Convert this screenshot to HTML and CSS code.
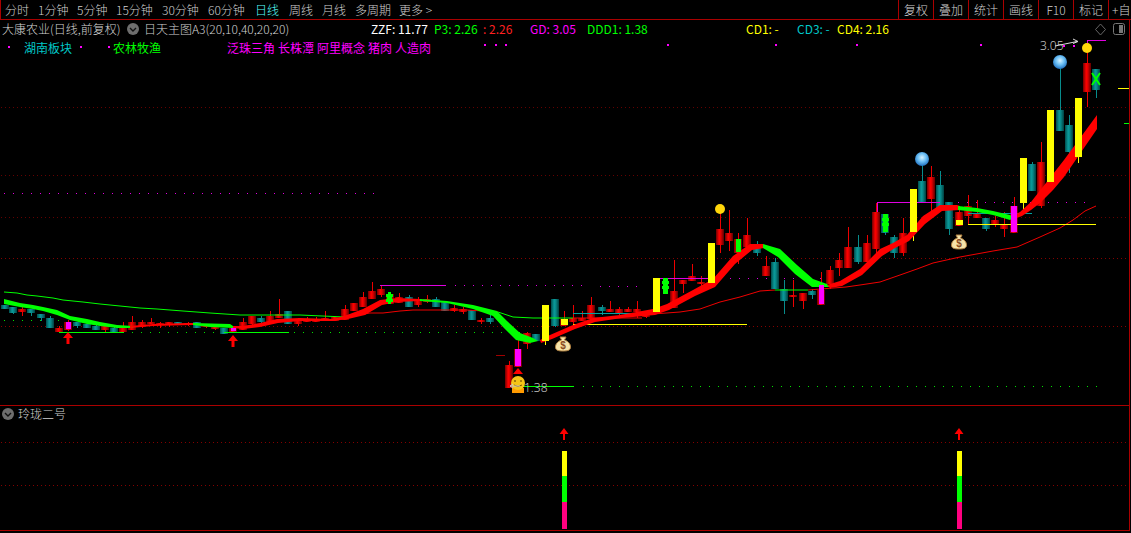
FILE: index.html
```html
<!DOCTYPE html>
<html lang="zh-CN">
<head>
<meta charset="utf-8">
<title>大康农业 日线</title>
<link rel="stylesheet" href="styles.css">
</head>
<body>
<div class="app">
  <header class="toolbar">
    <nav class="periods">
      <span class="t33">分时</span><span class="t39">1分钟</span><span class="t39">5分钟</span><span class="t46">15分钟</span><span class="t46">30分钟</span><span class="t47">60分钟</span><span class="t34 active">日线</span><span class="t33">周线</span><span class="t33">月线</span><span class="t44">多周期</span><span>更多 <i class="chev">&gt;</i></span>
    </nav>
    <nav class="tools">
      <span>复权</span><span>叠加</span><span>统计</span><span>画线</span><span>F10</span><span>标记</span><span class="clip">+自</span>
    </nav>
  </header>

  <section class="main">
    <div class="overlay">
      <div class="info">
        <span class="c-name w-name">大康农业(日线,前复权)</span>
        <svg class="toggle" width="12" height="12" viewBox="0 0 12 12"><circle cx="6" cy="6" r="6" fill="#6e6e6e"/><path d="M3 5l3 3 3-3" fill="none" stroke="#111" stroke-width="1.4"/></svg>
        <span class="c-name w-title">日天主图A3(20,10,40,20,20)</span>
        <span class="c-white w-zzf">ZZF: 11.77</span>
        <span class="c-green w-p3">P3: 2.26</span>
        <span class="c-red w-r">: 2.26</span>
        <span class="c-mag w-gd">GD: 3.05</span>
        <span class="c-green w-ddd">DDD1: 1.38</span>
        <span class="c-yellow w-cd1">CD1: -</span>
        <span class="c-teal w-cd3">CD3: -</span>
        <span class="c-yellow w-cd4">CD4: 2.16</span>
        <svg class="winicons" width="32" height="13" viewBox="0 0 32 13"><path d="M6.500 1l5 5.500-5 5.500-5-5.500z" fill="none" stroke="#666"/><rect x="19.500" y="0.500" width="11" height="11" rx="2" fill="none" stroke="#777"/><rect x="25" y="2" width="4" height="8" fill="#777"/></svg>
      </div>
      <div class="legend">
        <span class="c-teal w-a">湖南板块</span>
        <span class="c-green w-b">农林牧渔</span>
        <span class="c-mag w-c">泛珠三角</span>
        <span class="c-mag w-d">长株潭</span>
        <span class="c-mag w-e">阿里概念</span>
        <span class="c-mag w-f">猪肉</span>
        <span class="c-mag">人造肉</span>
      </div>
    </div>

    <svg class="chart" width="1129" height="385" viewBox="0 20 1129 385">
      <defs>
        <linearGradient id="ru"><stop offset="0" stop-color="#6e0000"/><stop offset=".4" stop-color="#f00"/><stop offset=".6" stop-color="#e00000"/><stop offset="1" stop-color="#5e0000"/></linearGradient>
        <linearGradient id="td"><stop offset="0" stop-color="#004c4c"/><stop offset=".4" stop-color="#0a9a9a"/><stop offset=".6" stop-color="#088888"/><stop offset="1" stop-color="#003f3f"/></linearGradient>
        <radialGradient id="ball" cx=".5" cy=".4" r=".6"><stop offset="0" stop-color="#d8f2ff"/><stop offset=".5" stop-color="#6cc0f5"/><stop offset="1" stop-color="#2070c0"/></radialGradient>
        <g id="bag">
          <path d="M-3-7h6l-1.500 3c4 1.500 6 4 6 7 0 3-2 4-7.500 4s-7.500-1-7.500-4c0-3 2-5.500 6-7z" fill="#f6e3a8" stroke="#b08040"/>
          <text class="dollar" x="0" y="5" text-anchor="middle">$</text>
        </g>
      </defs>

      <g class="grid">
        <path d="M1 107H1129M1 175H1129M1 217H1129"/>
        <path class="grid-b" d="M1 258H1129M1 326H1129"/>
      </g>

      <g class="dots-mag">
        <path d="M4 193H380"/>
        <path d="M455 285H590M600 286H640M730 278H830M958 202H1090"/>
      </g>
      <path class="dots-green" d="M4 320H62M132 332H520"/>
      <path class="dots-green" d="M583 386H1100"/>
      <path class="dots-mag2" d="M8 47h2M80 47h2M108 47h2M484 45h2M495 45h2M505 45h2M667 45h2M775 45h2M856 45h2M980 45h2M1063 46h2M1073 46h2"/>

      <g class="wick wr">
        <path d="M22 307V316M59 326V332M68 320V331M105 326V333M123 322V331M132 316V330M142 320V328M151 318V324M160 322V328M169 322V327M188 322V326M206 325V328M215 325V330M233 328V332M243 318V330M252 316V325M270 311V323M279 299V317M298 318V326M307 317V322M316 317V322M325 311V321M335 317V321M345 305V320M354 303V311M363 292V307M372 282V298M381 285V297M399 293V303M418 297V307M427 295V303M454 305V312M463 307V314M481 318V324M509 361V388M518 340V367M527 332V349M564 311V326M573 305V327M582 311V321M591 297V320M610 301V312M619 307V315M628 307V312M637 301V318M646 312V318M674 260V308M683 280V293M692 264V281M701 276V292M720 213V253M729 210V251M738 233V264M747 218V247M766 256V276M793 280V307M803 293V309M821 272V305M830 266V289M839 253V276M848 227V268M867 235V261M876 203V253M903 218V256M931 166V214M959 208V225M968 195V225M977 200V217M995 216V227M1004 212V237M1014 197V232M1041 142V208M1087 48V107"/>
      </g>
      <g class="wick wt">
        <path d="M13 307V314M31 309V316M41 314V321M50 316V328M77 322V328M87 324V328M96 323V329M114 327V331M224 328V333M261 316V323M409 295V306M436 297V306M490 315V324M555 299V327M602 305V315M757 241V256M775 258V288M784 280V314M812 289V299M858 235V264M885 214V235M894 235V258M922 159V201M940 171V207M949 202V235M986 218V231M1032 162V190M1060 62V131M1069 115V173M1096 69V98"/>
      </g>
      <g class="wick wy">
        <path d="M545 341V345M656 312V314M711 283V287M913 232V241M1023 203V212M1050 182V185M1078 157V163"/>
      </g>

      <g class="bodies" fill="url(#ru)">
        <rect x="18" y="309" height="3"/><rect x="55" y="328" height="4"/><rect x="64" y="322" height="8"/><rect x="101" y="326" height="4"/><rect x="119" y="328" height="4"/><rect x="128" y="322" height="8"/><rect x="138" y="322" height="5"/><rect x="147" y="322" height="2"/><rect x="156" y="323" height="2"/><rect x="165" y="322" height="3"/><rect x="184" y="323" height="2"/><rect x="202" y="325" height="2"/><rect x="211" y="327" height="2"/><rect x="229" y="328" height="4"/><rect x="239" y="322" height="8"/><rect x="248" y="316" height="8"/><rect x="266" y="316" height="6"/><rect x="275" y="314" height="4"/><rect x="294" y="320" height="4"/><rect x="303" y="319" height="3"/><rect x="312" y="319" height="3"/><rect x="321" y="318" height="3"/><rect x="331" y="317" height="4"/><rect x="341" y="309" height="11"/><rect x="350" y="303" height="8"/><rect x="359" y="297" height="10"/><rect x="368" y="291" height="8"/><rect x="377" y="289" height="6"/><rect x="386" y="294" height="10"/><rect x="395" y="297" height="6"/><rect x="414" y="299" height="6"/><rect x="423" y="299" height="3"/><rect x="450" y="308" height="3"/><rect x="459" y="309" height="3"/><rect x="477" y="320" height="2"/><rect x="505" y="365" height="23"/><rect x="514" y="349" height="18"/><rect x="523" y="333" height="11"/><rect x="560" y="319" height="7"/><rect x="569" y="318" height="4"/><rect x="578" y="318" height="3"/><rect x="587" y="305" height="14"/><rect x="606" y="309" height="3"/><rect x="615" y="309" height="5"/><rect x="624" y="309" height="3"/><rect x="633" y="309" height="3"/><rect x="642" y="314" height="3"/><rect x="670" y="291" height="17"/><rect x="679" y="280" height="4"/><rect x="688" y="276" height="5"/><rect x="697" y="282" height="2"/><rect x="716" y="229" height="16"/><rect x="725" y="233" height="8"/><rect x="734" y="239" height="14"/><rect x="743" y="235" height="12"/><rect x="762" y="266" height="10"/><rect x="789" y="295" height="2"/><rect x="799" y="293" height="8"/><rect x="817" y="290" height="15"/><rect x="826" y="270" height="14"/><rect x="835" y="260" height="8"/><rect x="844" y="247" height="21"/><rect x="863" y="243" height="19"/><rect x="872" y="212" height="37"/><rect x="899" y="233" height="20"/><rect x="927" y="177" height="22"/><rect x="955" y="212" height="14"/><rect x="964" y="206" height="10"/><rect x="973" y="214" height="4"/><rect x="991" y="220" height="4"/><rect x="1000" y="225" height="4"/><rect x="1010" y="206" height="27"/><rect x="1037" y="162" height="44"/><rect x="1083" y="63" height="29"/>
      </g>
      <g class="bodies" fill="url(#td)">
        <rect x="1" y="305" height="4"/><rect x="9" y="307" height="6"/><rect x="27" y="309" height="4"/><rect x="37" y="314" height="4"/><rect x="46" y="318" height="10"/><rect x="73" y="322" height="4"/><rect x="83" y="324" height="4"/><rect x="92" y="326" height="4"/><rect x="110" y="328" height="4"/><rect x="174" y="322" height="3"/><rect x="193" y="322" height="6"/><rect x="220" y="328" height="6"/><rect x="257" y="318" height="4"/><rect x="284" y="311" height="13"/><rect x="405" y="297" height="10"/><rect x="432" y="299" height="8"/><rect x="441" y="302" height="9"/><rect x="468" y="310" height="10"/><rect x="486" y="318" height="4"/><rect x="532" y="334" height="7"/><rect x="551" y="299" height="27"/><rect x="598" y="307" height="4"/><rect x="753" y="245" height="8"/><rect x="771" y="262" height="27"/><rect x="780" y="289" height="12"/><rect x="808" y="291" height="4"/><rect x="854" y="247" height="15"/><rect x="881" y="214" height="19"/><rect x="890" y="237" height="16"/><rect x="918" y="181" height="21"/><rect x="936" y="185" height="23"/><rect x="945" y="202" height="27"/><rect x="982" y="218" height="11"/><rect x="1028" y="164" height="27"/><rect x="1056" y="110" height="21"/><rect x="1065" y="125" height="27"/><rect x="1092" y="69" height="21"/>
      </g>

      <g class="thin">
        <path class="t-green" d="M4 292L17 293 27 295 37 296 53 298 63 300 83 302 100 304 120 306 140 308 157 309 183 311 210 313 240 315 300 315 345 317"/>
        <path class="t-red" d="M345 317L370 313 383 313 400 311 413 310 467 310 498 312"/>
        <path class="t-green" d="M498 312L513 317 533 318 573 318"/>
        <path class="t-red" d="M642 315L653 314 680 312 700 309 720 302 740 297 760 291 775 290"/>
        <path class="t-green" d="M775 290H808"/>
        <path class="t-red" d="M808 290L846 287 860 285 880 282 900 275 917 269 933 263 960 257 993 251 1017 247 1040 237 1060 228 1073 220 1085 211 1096 206"/>
        <path class="t-red" d="M573 318H642"/>
        <path class="t-teal" d="M573 313H637M968 213H1032"/>
        <path class="t-yellow" d="M573 324H747M968 224H1096M1118 88H1129"/>
        <path class="t-lime" d="M59 332H124M224 332H289M518 386H574M1124 123H1129"/>
        <path class="t-mag" d="M380 285H446M660 278H720M877 212V202H940M1087 48V40H1106"/>
        <path class="t-dash" d="M496 355H505"/>
      </g>

      <polygon fill="#0f0" points="4,299 20,303 33,305 43,307 57,310 70,316 87,319 100,322 117,325 133,326 133,328 117,328 100,326 87,324 70,320 57,315 43,311 33,309 20,307 4,304"/>
      <polygon fill="#f00" points="130,326 153,324 187,323 193,323 193,325 153,326 130,328"/>
      <polygon fill="#0f0" points="193,323 230,324 233,326 233,328 210,327 193,325"/>
      <polygon fill="#f00" points="233,326 243,326 260,323 277,319 300,318 333,319 347,315 363,309 380,300 397,298 420,299 420,301 397,302 382,305 365,315 348,319 333,321 300,321 278,323 260,327 243,329 233,328"/>
      <polygon fill="#0f0" points="420,299 447,301 473,305 497,311 507,321 520,333 533,338 538,341 530,343 516,340 503,327 493,316 473,309 447,303 420,301"/>
      <polygon fill="#f00" points="540,340 550,335 573,325 593,318 620,315 653,309 667,304 693,290 713,279 733,256 750,244 763,244 764,248 752,250 735,264 715,287 695,296 669,310 655,315 622,318 595,322 575,329 552,339 541,343"/>
      <polygon fill="#0f0" points="763,244 780,249 797,265 813,279 827,284 830,287 812,287 795,274 778,257 763,248"/>
      <polygon fill="#f00" points="827,285 840,281 860,269 880,249 893,243 907,235 923,216 940,205 957,205 960,206 960,210 942,211 925,224 909,241 895,248 882,256 862,275 842,286 830,288"/>
      <polygon fill="#0f0" points="958,206 977,208 993,211 1010,215 1014,217 1010,220 993,215 977,212 958,210"/>
      <polygon fill="#f00" points="1012,216 1020,212 1031,202 1053,174 1064,160 1097,115 1097,129 1064,177 1053,190 1040,203 1031,210 1022,216 1014,219"/>

      <g class="marks">
        <rect class="m-mag" x="66" y="322" width="5" height="7"/>
        <rect class="m-mag" x="231" y="328" width="5" height="3"/>
        <rect class="m-mag" x="515" y="349" width="6" height="17"/>
        <rect class="m-mag" x="819" y="285" width="5" height="19"/>
        <rect class="m-mag" x="1011" y="206" width="6" height="26"/>
        <rect class="m-yel" x="542" y="305" width="7" height="36"/>
        <rect class="m-yel" x="653" y="278" width="7" height="34"/>
        <rect class="m-yel" x="708" y="243" width="7" height="40"/>
        <rect class="m-yel" x="910" y="189" width="7" height="43"/>
        <rect class="m-yel" x="1020" y="158" width="7" height="45"/>
        <rect class="m-yel" x="1047" y="110" width="7" height="72"/>
        <rect class="m-yel" x="1075" y="98" width="7" height="59"/>
        <rect class="m-yel" x="561" y="319" width="7" height="6"/>
        <rect class="m-yel" x="956" y="220" width="7" height="5"/>
        <rect class="m-grn" x="736" y="239" width="5" height="13"/>
        <path class="m-grn" d="M388 292h3v2h2v3h-1v2h1v3h-2v2h-3v-2h-2v-3h1v-2h-1v-3h2z"/>
        <path class="m-grn" d="M663 278h5v3h1v3h-1v2h1v3h-1v5h-5v-5h-1v-3h1v-2h-1v-3h1z"/>
        <path class="m-grn" d="M883 214h5v4h1v3h-1v2h1v3h-1v6h-5v-6h-1v-3h1v-2h-1v-3h1z"/>
        <path class="x-mark" d="M1092 73L1100 85M1100 73L1092 85"/>
      </g>

      <g class="arrows">
        <path d="M68 332l5 6h-3.500v6h-3v-6H63z"/>
        <path d="M233 335l5 6h-3.500v6h-3v-6H228z"/>
        <path d="M518 368l5 6h-10z"/>
      </g>

      <circle cx="720" cy="209" r="5" fill="#ffd60a"/>
      <circle cx="1087" cy="48" r="5" fill="#ffd60a"/>
      <circle cx="922" cy="159" r="7" fill="url(#ball)"/>
      <circle cx="1060" cy="62" r="7" fill="url(#ball)"/>
      <use href="#bag" x="563" y="344"/>
      <use href="#bag" x="959" y="242"/>

      <rect x="512" y="388" width="12" height="5" fill="#ff9a00"/>
      <circle cx="518" cy="383" r="7" fill="#f5c518"/>
      <path d="M515 380v2M521 380v2" stroke="#553300"/>
      <path d="M514 385q4 3 8 0" fill="none" stroke="#775500"/>
      <path class="cursor" d="M510 386h10M513 384l-3 2 3 2"/>
      <text class="val" x="524" y="392">1.38</text>

      <text class="val" x="1040" y="50">3.05</text>
      <path class="leader" d="M1055 46l22-4.500M1073 39l5 2.500-5 2"/>
    </svg>
  </section>

  <section class="sub">
    <div class="sub-title">
      <svg width="12" height="12" viewBox="0 0 12 12"><circle cx="6" cy="6" r="6" fill="#6e6e6e"/><path d="M3 5l3 3 3-3" fill="none" stroke="#111" stroke-width="1.400"/></svg>
      <span class="c-name">玲珑二号</span>
    </div>
    <svg class="chart" width="1129" height="124" viewBox="0 406 1129 124">
      <path class="grid-b2" d="M1 442H1129M1 485H1129"/>
      <g class="arrows">
        <path d="M564 428l4.500 6h-3.500v6h-2v-6h-3.500z"/>
        <path d="M959 428l4.500 6h-3.500v6h-2v-6h-3.500z"/>
      </g>
      <g class="stack">
        <rect class="m-yel" x="562" y="451" width="5" height="25"/>
        <rect class="m-grn" x="562" y="476" width="5" height="26"/>
        <rect class="m-pink" x="562" y="502" width="5" height="27"/>
        <rect class="m-yel" x="957" y="451" width="5" height="25"/>
        <rect class="m-grn" x="957" y="476" width="5" height="26"/>
        <rect class="m-pink" x="957" y="502" width="5" height="27"/>
      </g>
    </svg>
  </section>
</div>
</body>
</html>
```
FILE: styles.css
```css
* { box-sizing: border-box; }
html, body { margin: 0; background: #000; }
body { font: 300 12px/1 "Noto Sans CJK SC", "Noto Sans", sans-serif; color: #d0d0d0; }
.app { position: relative; width: 1131px; height: 533px; overflow: hidden; background: #000; }

.toolbar { display: flex; justify-content: space-between; height: 20px; border-left: 1px solid #a00; border-bottom: 1px solid #a00; }
.periods { display: flex; align-items: center; padding-left: 4px; }
.periods span { white-space: nowrap; flex: none; }
.periods .active { color: #55ffff; }
.t33 { width: 33px; }
.t34 { width: 34px; }
.t39 { width: 39px; }
.t44 { width: 44px; }
.t46 { width: 46px; }
.t47 { width: 47px; }
.chev { font-style: normal; }
.tools { display: flex; }
.tools span { width: 35px; display: flex; align-items: center; justify-content: center; border-left: 1px solid #a00; }
.tools .clip { width: 23px; justify-content: flex-start; padding-left: 3px; overflow: hidden; white-space: nowrap; }

.main { position: relative; width: 1129px; height: 386px; border-bottom: 1px solid #a00; }
.sub { position: relative; width: 1129px; height: 125px; border-bottom: 1px solid #a00; }
.app::after { content: ""; position: absolute; left: 1129px; top: 20px; width: 1px; height: 511px; background: #a00; }
.chart { display: block; }

.overlay { position: absolute; left: 0; top: 0; width: 100%; }
.info { display: flex; align-items: center; height: 18px; padding-left: 2px; white-space: nowrap; }
.info span { flex: none; }
.toggle { flex: none; margin: 0 5px 0 0; }
.winicons { flex: none; }
.w-name { width: 125px; }
.w-title { width: 227px; }
.w-zzf { width: 63px; }
.w-p3 { width: 49px; }
.w-r { width: 47px; }
.w-gd { width: 57px; }
.w-ddd { width: 159px; }
.w-cd1 { width: 51px; }
.w-cd3 { width: 40px; }
.w-cd4 { width: 257px; }

.legend { display: flex; align-items: center; height: 20px; padding-left: 24px; white-space: nowrap; }
.legend span { flex: none; }
.w-a { width: 89px; }
.w-b { width: 114px; }
.w-c { width: 51px; }
.w-d { width: 39px; }
.w-e { width: 51px; }
.w-f { width: 27px; }

.c-name { color: #d0d0d0; }
.c-white { color: #ffffff; font-weight: 400; }
.c-green { color: #00ff00; font-weight: 400; }
.c-red { color: #ff2020; font-weight: 400; }
.c-mag { color: #ff00ff; font-weight: 400; }
.c-yellow { color: #ffff00; font-weight: 400; }
.c-teal { color: #00c8c8; font-weight: 400; }

.sub-title { position: absolute; left: 2px; top: 2px; display: flex; align-items: center; gap: 4px; }

.grid path { fill: none; stroke: #640000; stroke-width: 1; stroke-dasharray: 1 3; shape-rendering: crispEdges; }
.grid .grid-b { stroke: #840000; }
.grid-b2 { fill: none; stroke: #840000; stroke-dasharray: 1 3; shape-rendering: crispEdges; }
.dots-mag path { fill: none; stroke: #e000e0; stroke-dasharray: 1 8; shape-rendering: crispEdges; }
.dots-green { fill: none; stroke: #00e000; stroke-dasharray: 1 8; shape-rendering: crispEdges; }
.dots-mag2 { fill: none; stroke: #ff00ff; stroke-width: 2; shape-rendering: crispEdges; }

.wick path { fill: none; stroke-width: 1; shape-rendering: crispEdges; }
.wr path { stroke: #ee0000; }
.wt path { stroke: #088c8c; }
.wy path { stroke: #ffff00; }
.bodies rect { width: 8px; shape-rendering: crispEdges; }

.thin path { fill: none; stroke-width: 1; }
.t-green { stroke: #00ff00; }
.t-red { stroke: #f00000; }
.t-teal { stroke: #00a0a0; shape-rendering: crispEdges; }
.t-yellow { stroke: #ffff00; shape-rendering: crispEdges; }
.t-lime { stroke: #00ff00; shape-rendering: crispEdges; }
.t-mag { stroke: #e000e0; shape-rendering: crispEdges; }
.t-dash { stroke: #a00000; shape-rendering: crispEdges; }

.m-mag { fill: #ff00ff; }
.m-yel { fill: #ffff00; }
.m-grn { fill: #00ff00; }
.m-pink { fill: #ff0080; }
.x-mark { fill: none; stroke: #00ff00; stroke-width: 2; }
.arrows path { fill: #ff0000; }

.dollar { font: bold 10px "Liberation Sans", sans-serif; fill: #8a4a20; }
.val { font: 300 12px "Noto Sans", sans-serif; fill: #c4c4c4; }
.cursor { fill: none; stroke: #cccccc; }
.leader { fill: none; stroke: #dddddd; }
```
